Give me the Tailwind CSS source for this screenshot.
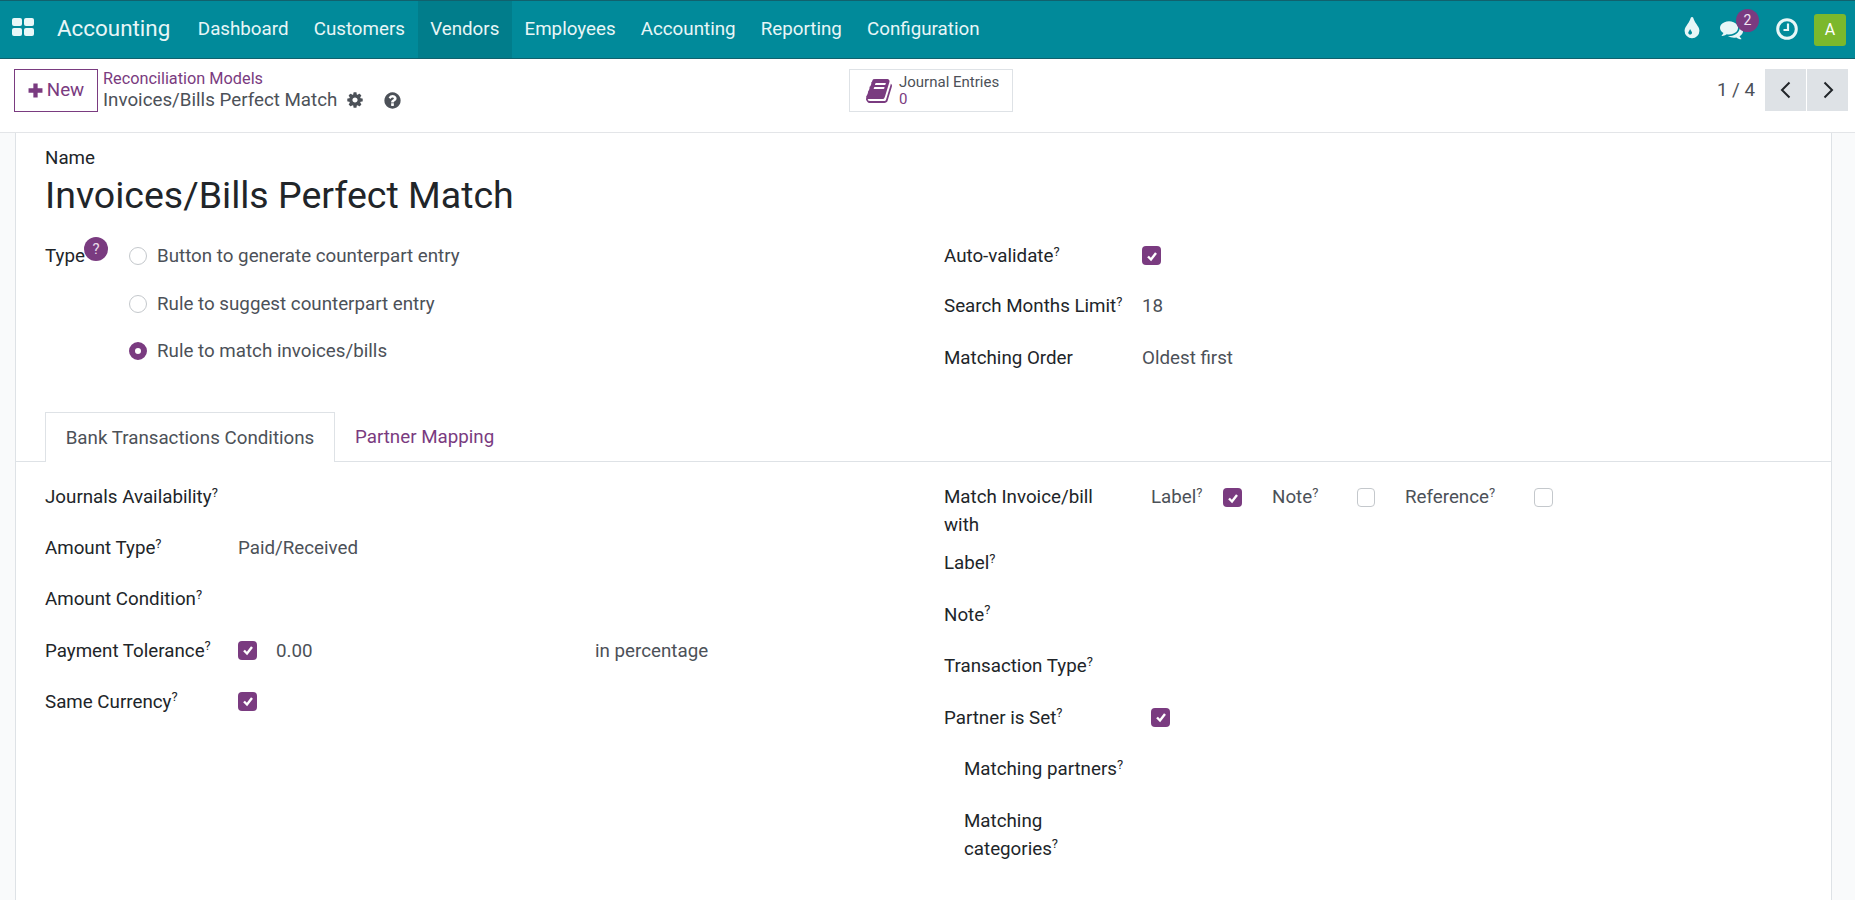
<!DOCTYPE html>
<html lang="en">

<head>
    <meta charset="UTF-8">
    <script src="https://cdn.jsdelivr.net/npm/@tailwindcss/browser@4"></script>
    <title>Invoices/Bills Perfect Match</title>
</head>

<body class="h-screen overflow-hidden bg-white font-['Roboto',sans-serif] text-[18.75px] text-[#212529]">
    <!-- top nav -->
    <nav class="flex h-[59px] items-stretch border-y border-t-[#11616d] border-b-[#11616d] bg-[#018a9a] text-[#e8f6f7]">
        <div class="flex w-[46px] items-center pl-[12px]">
            <svg class="mt-[-5px] h-[18px] w-[22px]" viewBox="0 0 22 18" fill="#e9f7f8">
                <rect x="0" y="0" width="10" height="8" rx="2" />
                <rect x="12" y="0" width="10" height="8" rx="2" />
                <rect x="0" y="10" width="10" height="8" rx="2" />
                <rect x="12" y="10" width="10" height="8" rx="2" />
            </svg>
        </div>
        <a class="flex items-center pb-[2px] pl-[11px] pr-[15px] text-[22.400px]">Accounting</a>
        <a class="flex items-center px-[12.600px] pb-[1px]">Dashboard</a>
        <a class="flex items-center px-[12.600px] pb-[1px]">Customers</a>
        <a class="flex items-center bg-[#017d8b] px-[12.600px] pb-[1px]">Vendors</a>
        <a class="flex items-center px-[12.600px] pb-[1px]">Employees</a>
        <a class="flex items-center px-[12.600px] pb-[1px]">Accounting</a>
        <a class="flex items-center px-[12.600px] pb-[1px]">Reporting</a>
        <a class="flex items-center px-[12.600px] pb-[1px]">Configuration</a>
        <div class="ml-auto flex items-center pr-[9px]">
            <svg class="mr-[15px] mt-[-2px] h-[26px] w-[26px]" viewBox="0 0 1792 1792" fill="#e8f6f7">
                <path d="M896 1152q0-36-20-69-1-1-15.500-22.500t-25.500-38-25-44-21-50.500q-4-16-21-16t-21 16q-7 23-21 50.500t-25 44-25.500 38-15.500 22.500q-20 33-20 69 0 53 37.500 90.500t90.500 37.500 90.500-37.500 37.500-90.500zm512-128q0 212-150 362t-362 150-362-150-150-362q0-145 81-275 6-9 62.500-90.500t101-151 99.500-178 83-201.500q9-30 34-47t51-17 51.500 17 33.500 47q28 93 83 201.500t99.500 178 101 151 62.500 90.500q81 127 81 275z" />
            </svg>
            <div class="relative mr-[33px]">
                <svg class="h-[23px] w-[23px]" viewBox="0 0 1792 1792" fill="#e8f6f7">
                    <path d="M1408 768q0 139-94 257t-256.500 186.500-353.500 68.500q-86 0-176-16-124 88-278 128-36 9-86 16h-3q-11 0-20.500-8t-11.500-21q-1-3-1-6.500t.5-6.500 2-6l2.500-5 3.500-5.500 4-5 4.500-5 4-4.500q5-6 23-25t26-29.500 22.500-29 25-38.500 20.500-44q-124-72-195-177t-71-224q0-139 94-257t256.500-186.500 353.500-68.500 353.500 68.500 256.500 186.500 94 257zm384 256q0 120-71 224.500t-195 176.500q10 24 20.500 44t25 38.500 22.500 29 26 29.500 23 25q1 1 4 4.500t4.500 5 4 5 3.500 5.500l2.500 5 2 6 .5 6.500-1 6.500q-3 14-13 22t-22 7q-50-7-86-16-154-40-278-128-90 16-176 16-271 0-472-132 58 4 88 4 161 0 309-45t264-129q125-92 192-212t67-254q0-77-23-152 129 71 204 178t75 230z" />
                </svg>
                <span class="absolute left-[16px] top-[-9px] flex h-[23px] w-[23px] items-center justify-center rounded-full bg-[#7a3b80] text-[14px] text-[#f1e6f2]">2</span>
            </div>
            <svg class="mr-[16px] mt-[-2px] h-[22px] w-[22px]" viewBox="0 0 22 22" fill="none" stroke="#e8f6f7">
                <circle cx="11" cy="11" r="9.300" stroke-width="3" />
                <path d="M12 5.500V12H7.500" stroke-width="2.200" />
            </svg>
            <div class="flex h-[32px] w-[32px] items-center justify-center rounded-[3px] bg-[#7cb82c] text-[16px] text-white">A</div>
        </div>
    </nav>

    <!-- control panel -->
    <header class="flex h-[74px] items-start border-b border-[#e3e5e8] pl-[14px] pr-[7px] pt-[10px]">
        <button class="flex h-[43px] w-[84px] items-center justify-center gap-[4px] border border-[#7a3b80] text-[#7a3b80]">
            <svg class="h-[15px] w-[15px]" viewBox="0 0 14 14" fill="#7a3b80"><path d="M5 0.500h4v4.500h4.500v4H9v4.500H5V9H0.500V5H5z" /></svg>
            New
        </button>
        <div class="ml-[5px] w-[746px] leading-[20px]">
            <a class="block text-[16.300px] text-[#7a3b80]">Reconciliation Models</a>
            <div class="mt-[1px] flex items-center text-[#4c5158]">
                Invoices/Bills Perfect Match
                <svg class="ml-[9px] h-[18px] w-[18px]" viewBox="0 0 1792 1792" fill="#4c5158">
                    <path d="M1152 896q0-106-75-181t-181-75-181 75-75 181 75 181 181 75 181-75 75-181zm512-109v222q0 12-8 23t-19 13l-185 28q-19 54-39 91 35 50 107 138 10 12 10 25t-9 23q-27 37-99 108t-94 71q-12 0-26-9l-138-108q-44 23-91 38-16 136-29 186-7 28-36 28h-222q-14 0-24.500-8.500t-11.500-21.500l-28-184q-49-16-90-37l-141 107q-10 9-25 9-14 0-25-11-126-114-165-168-7-10-7-23 0-12 8-23 15-21 51-66.500t54-70.500q-27-50-41-99l-183-27q-13-2-21-12.500t-8-23.500v-222q0-12 8-23t19-13l186-28q14-46 39-92-40-57-107-138-10-12-10-24 0-10 9-23 26-36 98.500-107.500t94.500-71.500q13 0 26 10l138 107q44-23 91-38 16-136 29-186 7-28 36-28h222q14 0 24.500 8.500t11.500 21.500l28 184q49 16 90 37l142-107q9-9 24-9 13 0 25 10 129 119 165 170 7 8 7 22 0 12-8 23-15 21-51 66.500t-54 70.500q26 50 41 98l183 28q13 2 21 12.500t8 23.500z" />
                </svg>
                <svg class="ml-[19px] h-[19px] w-[19px]" viewBox="0 0 1792 1792" fill="#4c5158">
                    <path d="M1024 1376v-192q0-14-9-23t-23-9h-192q-14 0-23 9t-9 23v192q0 14 9 23t23 9h192q14 0 23-9t9-23zm256-672q0-88-55.500-163t-138.500-116-170-41q-243 0-371 213-15 24 8 42l132 100q7 6 19 6 16 0 25-12 53-68 86-92 34-24 86-24 48 0 85.500 26t37.500 59q0 38-20 61t-68 45q-63 28-115.500 86.500t-52.500 125.500v36q0 14 9 23t23 9h192q14 0 23-9t9-23q0-19 21.500-49.500t54.500-49.500q32-18 49-28.500t46-35 44.500-48 28-60.500 12.500-81zm384 192q0 209-103 385.500t-279.500 279.500-385.500 103-385.500-103-279.500-279.500-103-385.500 103-385.500 279.500-279.500 385.500-103 385.500 103 279.500 279.500 103 385.500z" />
                </svg>
            </div>
        </div>
        <div class="flex h-[43px] w-[164px] items-center border border-[#dee2e6] pl-[15px]">
            <svg class="h-[28px] w-[28px]" viewBox="0 0 1792 1792" fill="#7a3b80">
                <path d="M1703 478q40 57 18 129l-275 906q-19 64-76.500 107.500t-122.500 43.500h-923q-77 0-148.500-53.500t-99.500-131.500q-24-67-2-127 0-4 3-27t4-37q1-8-3-21.500t-3-19.500q2-11 8-21t16.500-23.500 16.500-23.500q23-38 45-91.500t30-91.500q3-10 .5-30t-.5-28q3-11 17-28t17-23q21-36 42-92t25-90q1-9-2.500-32t.5-28q4-13 22-30.500t22-22.500q19-26 42.500-84.500t27.500-96.500q1-8-3-25.500t-2-26.500q2-8 9-18t18-23 17-21q8-12 16.500-30.500t15-35 16-36 19.500-32 26.500-23.500 36-11.500 47.500 5.500l-1 3q38-9 51-9h761q74 0 114 56t18 130l-274 906q-36 119-71.500 153.500t-128.500 34.500h-869q-27 0-38 15-11 16-1 43 24 70 144 70h923q29 0 56-15.500t35-41.500l300-987q7-22 5-57 38 15 59 43zm-1064 2q-4 13 2 22.500t20 9.500h608q13 0 25.500-9.500t16.500-22.500l21-64q4-13-2-22.500t-20-9.500h-608q-13 0-25.500 9.500t-16.500 22.500zm-83 256q-4 13 2 22.500t20 9.500h608q13 0 25.500-9.500t16.500-22.500l21-64q4-13-2-22.500t-20-9.500h-608q-13 0-25.500 9.500t-16.500 22.500z" />
            </svg>
            <div class="ml-[6px] text-[15px] leading-[17px]">
                <div class="text-[#4c5158]">Journal Entries</div>
                <div class="text-[#7a3b80]">0</div>
            </div>
        </div>
        <div class="ml-auto mr-[10px] mt-[9px] leading-[24px] text-[#4c5158]">1 / 4</div>
        <button class="flex h-[42px] w-[41px] items-center justify-center bg-[#dee2e6]">
            <svg class="h-[20px] w-[20px]" viewBox="0 0 20 20" fill="none" stroke="#212529" stroke-width="2"><path d="M13.500 2.500 6 10l7.500 7.500" /></svg>
        </button>
        <button class="ml-px flex h-[42px] w-[41px] items-center justify-center bg-[#dee2e6]">
            <svg class="h-[20px] w-[20px]" viewBox="0 0 20 20" fill="none" stroke="#212529" stroke-width="2"><path d="M6.500 2.500 14 10l-7.500 7.500" /></svg>
        </button>
    </header>

    <!-- form sheet -->
    <main class="flex h-[768px] overflow-hidden bg-[#f9fafb]">
        <div class="ml-[15px] w-[1817px] border-x border-[#dee2e6] bg-white">
            <div class="px-[29px] pt-[13px]">
                <div class="h-[24px] leading-[24px]">Name</div>
                <h1 class="h-[50px] text-[37.500px] leading-[50px]">Invoices/Bills Perfect Match</h1>
                <div class="mt-[24px] flex h-[168px]">
                    <div class="flex w-[899px]">
                        <div class="relative w-[84px] leading-[24px]">Type
                            <span class="absolute left-[39px] top-[-7px] flex h-[24px] w-[24px] items-center justify-center rounded-full bg-[#7a3b80] text-[15px] text-[#e9dcea]">?</span>
                        </div>
                        <div class="text-[#4c5158]">
                            <label class="flex h-[48px] items-start leading-[24px]"><span class="mr-[10px] mt-[3px] h-[18px] w-[18px] rounded-full border border-[#c4c8cc]"></span>Button to generate counterpart entry</label>
                            <label class="flex h-[47px] items-start leading-[24px]"><span class="mr-[10px] mt-[3px] h-[18px] w-[18px] rounded-full border border-[#c4c8cc]"></span>Rule to suggest counterpart entry</label>
                            <label class="flex h-[47px] items-start leading-[24px]"><span class="mr-[10px] mt-[3px] h-[18px] w-[18px] rounded-full border-[6px] border-[#7a3b80]"></span>Rule to match invoices/bills</label>
                        </div>
                    </div>
                    <div>
                        <div class="flex h-[50px] items-start"><span class="w-[198px] leading-[24px]">Auto-validate<sup class="text-[13px]">?</sup></span><span class="mt-[2px] flex h-[19px] w-[19px] items-center justify-center rounded-[4px] bg-[#7a3b80]"><svg class="h-[12px] w-[12px]" viewBox="0 0 12 12" fill="none" stroke="#fff" stroke-width="2.400"><path d="M2 6.500 5 9.500 10 3" /></svg></span></div>
                        <div class="flex h-[52px] items-start"><span class="w-[198px] leading-[24px]">Search Months Limit<sup class="text-[13px]">?</sup></span><span class="leading-[24px] text-[#4c5158]">18</span></div>
                        <div class="flex items-start"><span class="w-[198px] leading-[24px]">Matching Order</span><span class="leading-[24px] text-[#4c5158]">Oldest first</span></div>
                    </div>
                </div>
            </div>

            <!-- tabs -->
            <div class="flex h-[50px] items-stretch border-b border-[#dee2e6] pl-[29px]">
                <div class="z-10 mb-[-1px] flex w-[290px] items-center justify-center border-x border-t border-[#dee2e6] bg-white pt-[2px] text-[#4c5158]">Bank Transactions Conditions</div>
                <div class="flex items-center px-[20px] pt-[2px] text-[#7a3b80]">Partner Mapping</div>
            </div>

            <!-- tab content -->
            <div class="flex px-[29px] pt-[23px]">
                <div class="w-[899px]">
                    <div class="flex h-[51.200px] items-start leading-[24px]"><span class="w-[193px]">Journals Availability<sup class="text-[13px]">?</sup></span></div>
                    <div class="flex h-[51.200px] items-start leading-[24px]"><span class="w-[193px]">Amount Type<sup class="text-[13px]">?</sup></span><span class="text-[#4c5158]">Paid/Received</span></div>
                    <div class="flex h-[51.200px] items-start leading-[24px]"><span class="w-[193px]">Amount Condition<sup class="text-[13px]">?</sup></span></div>
                    <div class="flex h-[51.200px] items-start leading-[24px] text-[#4c5158]">
                        <span class="w-[193px] text-[#212529]">Payment Tolerance<sup class="text-[13px]">?</sup></span>
                        <span class="mt-[2px] flex h-[19px] w-[19px] items-center justify-center rounded-[4px] bg-[#7a3b80]"><svg class="h-[12px] w-[12px]" viewBox="0 0 12 12" fill="none" stroke="#fff" stroke-width="2.400"><path d="M2 6.500 5 9.500 10 3" /></svg></span>
                        <span class="ml-[19px] w-[319px]">0.00</span>
                        <span>in percentage</span>
                    </div>
                    <div class="flex h-[51.200px] items-start leading-[24px]">
                        <span class="w-[193px]">Same Currency<sup class="text-[13px]">?</sup></span>
                        <span class="mt-[2px] flex h-[19px] w-[19px] items-center justify-center rounded-[4px] bg-[#7a3b80]"><svg class="h-[12px] w-[12px]" viewBox="0 0 12 12" fill="none" stroke="#fff" stroke-width="2.400"><path d="M2 6.500 5 9.500 10 3" /></svg></span>
                    </div>
                </div>
                <div class="mt-[-2px] leading-[28px]">
                    <div class="flex h-[66px] items-start">
                        <span class="w-[207px] pr-[30px]">Match Invoice/bill with</span>
                        <span class="w-[72px] text-[#4c5158]">Label<sup class="text-[13px]">?</sup></span>
                        <span class="mr-[30px] mt-[5px] flex h-[19px] w-[19px] items-center justify-center rounded-[4px] bg-[#7a3b80]"><svg class="h-[12px] w-[12px]" viewBox="0 0 12 12" fill="none" stroke="#fff" stroke-width="2.400"><path d="M2 6.500 5 9.500 10 3" /></svg></span>
                        <span class="w-[85px] text-[#4c5158]">Note<sup class="text-[13px]">?</sup></span>
                        <span class="mr-[30px] mt-[5px] h-[19px] w-[18px] rounded-[4px] border border-[#c4c8cc]"></span>
                        <span class="w-[129px] text-[#4c5158]">Reference<sup class="text-[13px]">?</sup></span>
                        <span class="mt-[5px] h-[19px] w-[19px] rounded-[4px] border border-[#c4c8cc]"></span>
                    </div>
                    <div class="h-[51.500px]">Label<sup class="text-[13px]">?</sup></div>
                    <div class="h-[51.500px]">Note<sup class="text-[13px]">?</sup></div>
                    <div class="h-[51.500px]">Transaction Type<sup class="text-[13px]">?</sup></div>
                    <div class="flex h-[51.500px] items-start">
                        <span class="w-[207px]">Partner is Set<sup class="text-[13px]">?</sup></span>
                        <span class="mt-[4px] flex h-[19px] w-[19px] items-center justify-center rounded-[4px] bg-[#7a3b80]"><svg class="h-[12px] w-[12px]" viewBox="0 0 12 12" fill="none" stroke="#fff" stroke-width="2.400"><path d="M2 6.500 5 9.500 10 3" /></svg></span>
                    </div>
                    <div class="h-[51.500px] pl-[20px]">Matching partners<sup class="text-[13px]">?</sup></div>
                    <div class="w-[207px] pl-[20px] pr-[40px]">Matching categories<sup class="text-[13px]">?</sup></div>
                </div>
            </div>
        </div>
    </main>
</body>

</html>
